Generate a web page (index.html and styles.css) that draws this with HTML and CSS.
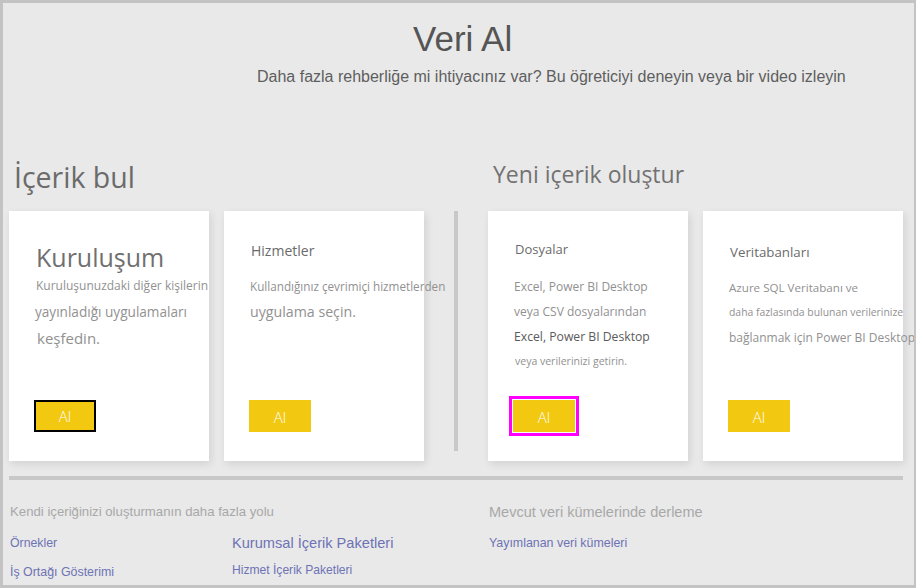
FILE: index.html
```html
<!DOCTYPE html>
<html lang="tr">
<head>
<meta charset="utf-8">
<title>Veri Al</title>
<link rel="stylesheet" href="styles.css">
</head>
<body>
<div class="frame">
  <header class="header">
    <h1 class="title">Veri Al</h1>
    <p class="subtitle">Daha fazla rehberliğe mi ihtiyacınız var? Bu öğreticiyi deneyin veya bir video izleyin</p>
  </header>

  <main class="sources">
    <section class="group">
      <h2 class="group-title group-title--find">İçerik bul</h2>
      <div class="cards">
        <article class="card card--org">
          <div class="card-title card-title--big">Kuruluşum</div>
          <div class="card-desc">
            <div class="line s12 nudge1">Kuruluşunuzdaki diğer kişilerin</div>
            <div class="line s136">yayınladığı uygulamaları</div>
            <div class="line s15 nudge2">keşfedin.</div>
          </div>
          <button class="get-btn get-btn--selected">Al</button>
        </article>
        <article class="card card--services">
          <div class="card-title s14">Hizmetler</div>
          <div class="card-desc">
            <div class="line s117">Kullandığınız çevrimiçi hizmetlerden</div>
            <div class="line s142">uygulama seçin.</div>
          </div>
          <button class="get-btn">Al</button>
        </article>
      </div>
    </section>

    <div class="divider"></div>

    <section class="group">
      <h2 class="group-title group-title--create">Yeni içerik oluştur</h2>
      <div class="cards">
        <article class="card card--files">
          <div class="card-title s13">Dosyalar</div>
          <div class="card-desc card-desc--tight">
            <div class="line s12">Excel, Power BI Desktop</div>
            <div class="line s12">veya CSV dosyalarından</div>
            <div class="line s122 dark">Excel, Power BI Desktop</div>
            <div class="line s105 nudge1">veya verilerinizi getirin.</div>
          </div>
          <button class="get-btn get-btn--focus">Al</button>
        </article>
        <article class="card card--db">
          <div class="card-title s133">Veritabanları</div>
          <div class="card-desc card-desc--tight">
            <div class="line s116">Azure SQL Veritabanı ve</div>
            <div class="line s104">daha fazlasında bulunan verilerinize</div>
            <div class="line s12">bağlanmak için Power BI Desktop</div>
          </div>
          <button class="get-btn">Al</button>
        </article>
      </div>
    </section>
  </main>

  <hr class="rule">

  <footer class="more">
    <div class="more-left">
      <div class="more-heading">Kendi içeriğinizi oluşturmanın daha fazla yolu</div>
      <div class="link-grid">
        <a class="link f123">Örnekler</a>
        <a class="link f146">Kurumsal İçerik Paketleri</a>
        <a class="link f124 row2">İş Ortağı Gösterimi</a>
        <a class="link f121">Hizmet İçerik Paketleri</a>
      </div>
    </div>
    <div class="more-right">
      <div class="more-heading more-heading--big">Mevcut veri kümelerinde derleme</div>
      <div class="link-grid link-grid--single">
        <a class="link f124">Yayımlanan veri kümeleri</a>
      </div>
    </div>
  </footer>
</div>
</body>
</html>
```

FILE: styles.css
```css
* { box-sizing: border-box; }

html, body {
  margin: 0;
  padding: 0;
}

body {
  width: 916px;
  height: 588px;
  overflow: hidden;
  font-family: "Open Sans", "Liberation Sans", sans-serif;
}

.frame {
  width: 916px;
  height: 588px;
  border-style: solid;
  border-color: #c3c3c3;
  border-width: 3px 2px 3px 3px;
  background: #e9e9e9;
  overflow: hidden;
}

/* Header */
.header {
  padding-top: 16px;
}

.title {
  margin: 0 0 0 410px;
  font-family: "Liberation Sans", Arial, sans-serif;
  font-weight: normal;
  font-size: 35px;
  line-height: 40px;
  color: #555555;
}

.subtitle {
  margin: 8px 0 0 254px;
  font-family: "Liberation Sans", Arial, sans-serif;
  font-size: 16px;
  line-height: 20px;
  color: #5e5e5e;
  white-space: nowrap;
}

/* Sources */
.sources {
  display: flex;
  align-items: flex-start;
  margin-top: 72px;
  padding-left: 6px;
}

.group-title {
  margin: 0;
  height: 52px;
  padding-left: 5px;
  font-weight: normal;
  white-space: nowrap;
}

.group-title--find {
  font-size: 28.5px;
  line-height: 36px;
  color: #6b6b6b;
}

.group-title--create {
  font-size: 23px;
  line-height: 30px;
  color: #727272;
}

.cards {
  display: flex;
  gap: 15px;
}

.divider {
  width: 4px;
  height: 240px;
  margin: 52px 30px 0 30px;
  background: #c8c8c8;
}

.card {
  display: flex;
  flex-direction: column;
  width: 200px;
  height: 250px;
  padding: 0 0 29px 25px;
  background: #ffffff;
  box-shadow: 2px 3px 8px rgba(0, 0, 0, 0.10);
  white-space: nowrap;
}

.card-title {
  margin-left: 2px;
  line-height: 20px;
  color: #6b6b6b;
}

.card-title--big {
  font-size: 25px;
  line-height: 30px;
  color: #707070;
}

.card--org { padding-top: 31px; }
.card--org .card-desc { margin-top: 1px; }

.card--services { padding-top: 30px; }
.card--services .card-desc { margin-top: 12px; }

.card--files { padding-top: 28px; }
.card--files .card-desc { margin-top: 15px; }

.card--db { padding-top: 31px; }
.card--db .card-desc { margin-top: 13px; }

.card-desc {
  margin-left: 1px;
  color: #919191;
}

.line {
  line-height: 26px;
}

.card-desc--tight .line {
  line-height: 25px;
}

.nudge1 { margin-left: 1px; }
.nudge2 { margin-left: 2px; }

.dark { color: #5a5a5a; }

.s104 { font-size: 10.4px; }
.s105 { font-size: 10.5px; }
.s116 { font-size: 11.6px; }
.s117 { font-size: 11.7px; }
.s12 { font-size: 12px; }
.s122 { font-size: 12.2px; }
.s13 { font-size: 13px; }
.s133 { font-size: 13.3px; }
.s136 { font-size: 13.6px; }
.s14 { font-size: 14px; }
.s142 { font-size: 14.2px; }
.s15 { font-size: 15px; }

.get-btn {
  align-self: flex-start;
  margin-top: auto;
  width: 62px;
  height: 32px;
  padding: 2px 0 0 0;
  border: none;
  background: #f2c811;
  color: #ffffff;
  font-family: "Open Sans", sans-serif;
  font-weight: 300;
  font-size: 15px;
  line-height: 28px;
  text-align: center;
}

.get-btn--selected {
  border: 2px solid #000000;
  padding-top: 0;
}

.get-btn--focus {
  box-shadow: 0 0 0 1px #ffffff, 0 0 0 4px #ff00ff;
}

/* Rule */
.rule {
  width: 894px;
  height: 4px;
  margin: 15px 0 0 6px;
  border: none;
  background: #c8c8c8;
}

/* Footer */
.more {
  display: flex;
  margin-top: 24px;
  padding-left: 7px;
  font-family: "Liberation Sans", Arial, sans-serif;
}

.more-left {
  width: 479px;
}

.more-heading {
  font-size: 13.2px;
  line-height: 16px;
  color: #a8a8a8;
  white-space: nowrap;
}

.more-heading--big {
  font-size: 14.5px;
}

.link-grid {
  display: grid;
  grid-template-columns: 222px auto;
  grid-auto-rows: 27px;
  margin-top: 13px;
}

.link-grid--single {
  grid-template-columns: auto;
}

.link {
  line-height: 20px;
  color: #6e73b5;
  white-space: nowrap;
}

.row2 { margin-top: 2px; }

.f121 { font-size: 12.1px; }
.f123 { font-size: 12.3px; }
.f124 { font-size: 12.4px; }
.f146 { font-size: 14.6px; }
```
